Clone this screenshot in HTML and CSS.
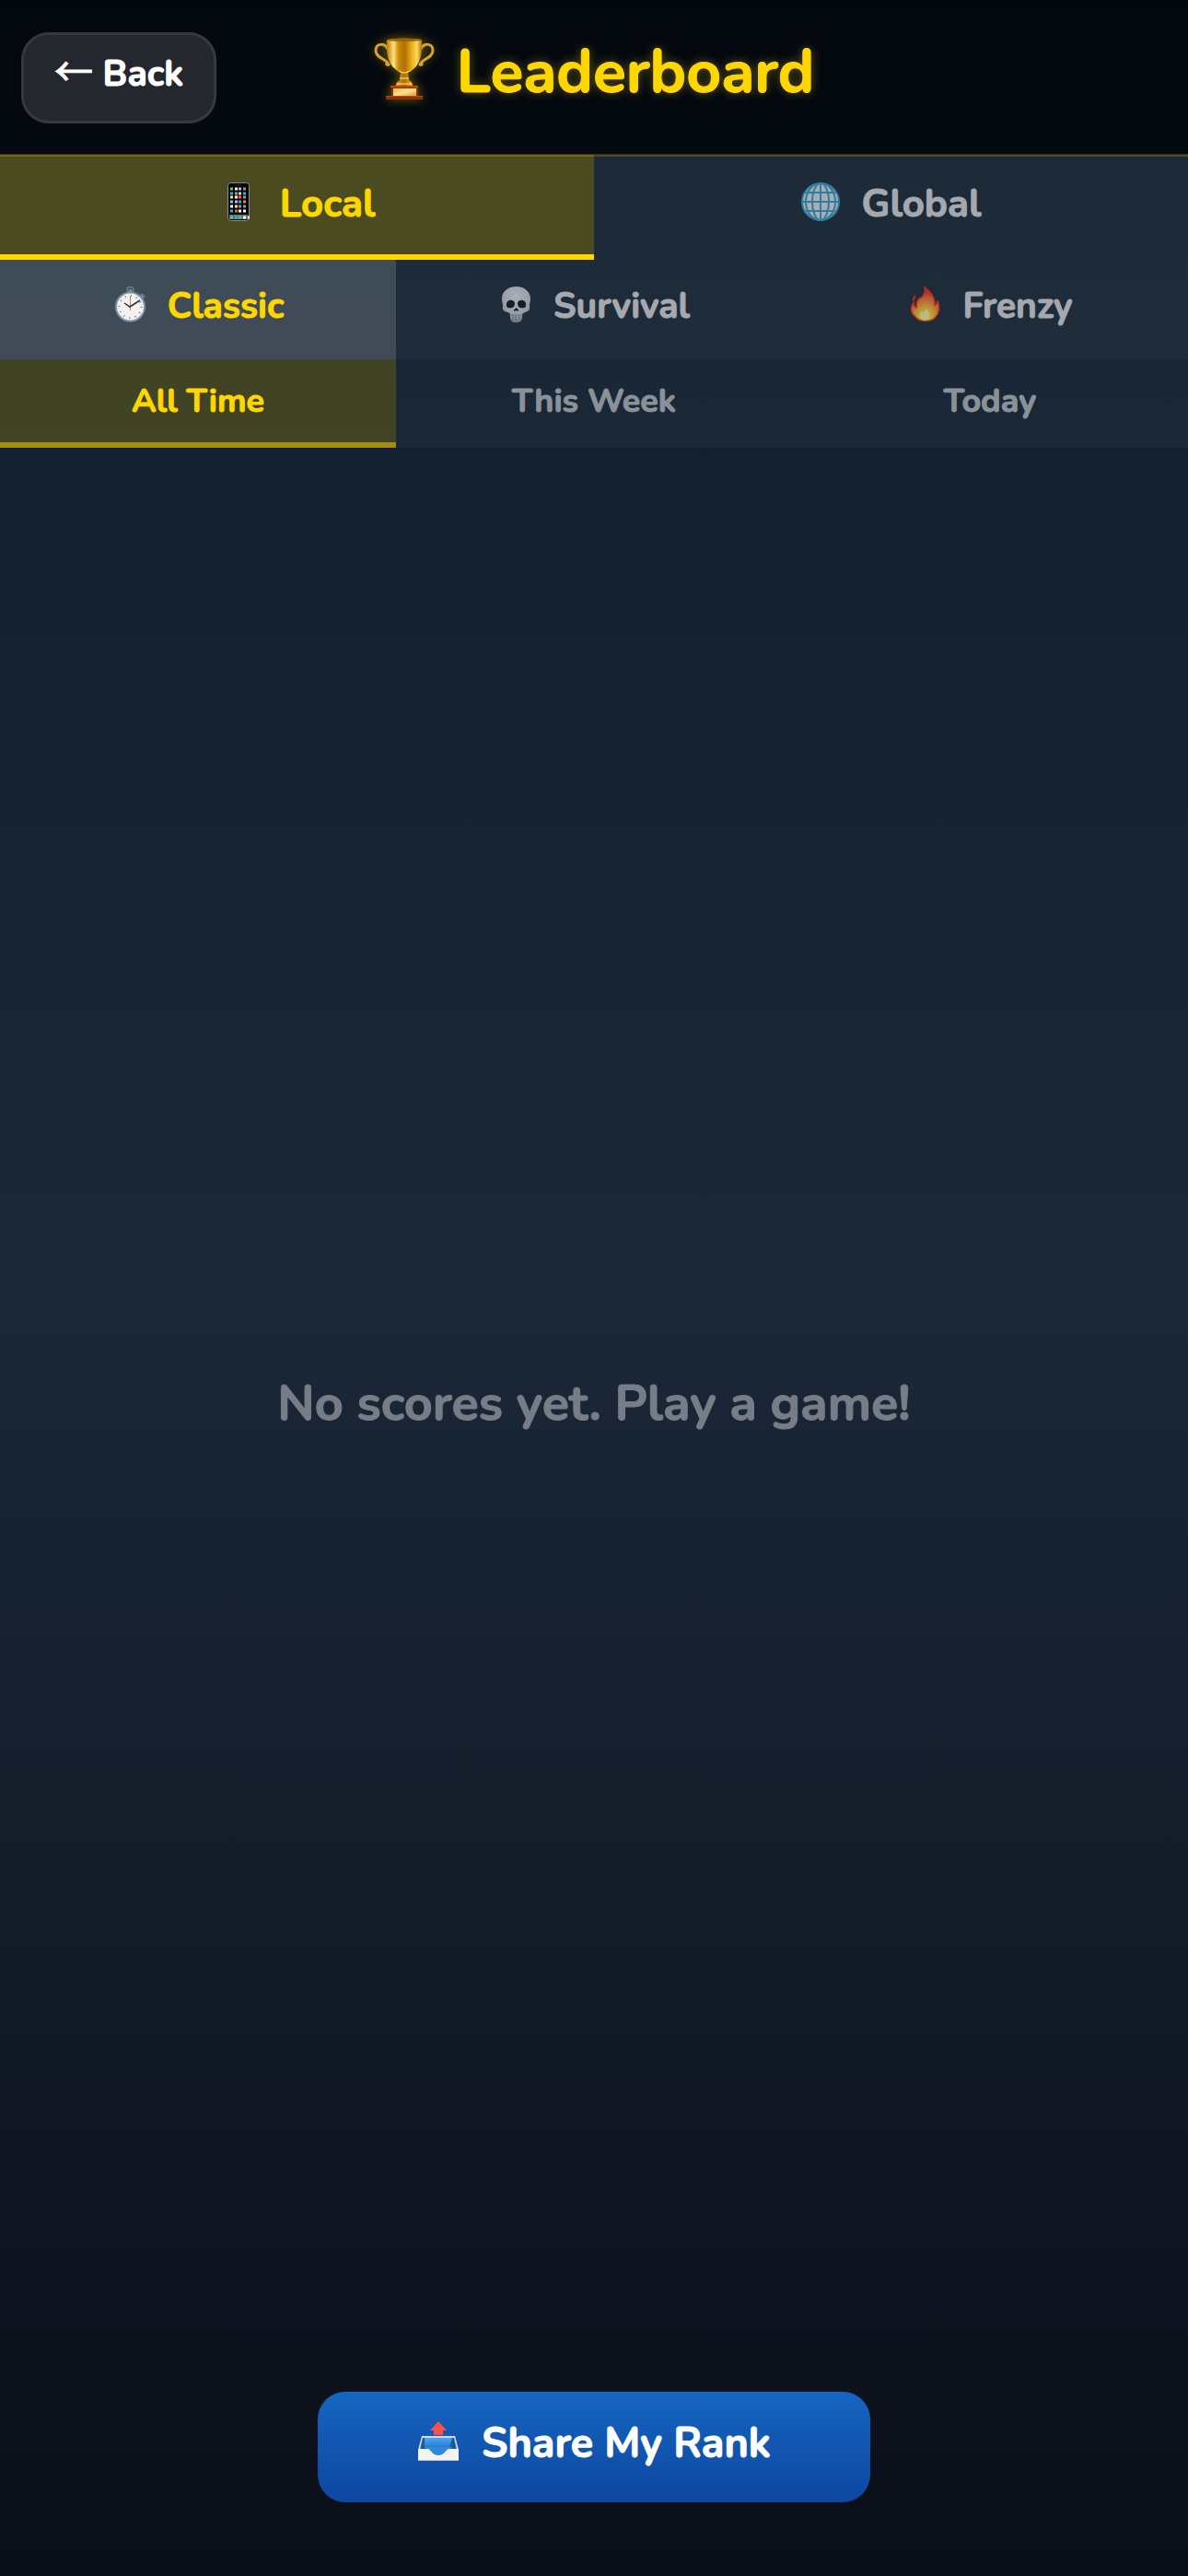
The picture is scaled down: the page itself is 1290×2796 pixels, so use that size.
FILE: index.html
```html
<!DOCTYPE html>
<html lang="en">
<head>
  <meta charset="utf-8">
  <meta name="viewport" content="width=device-width, initial-scale=1">
  <title>Leaderboard</title>
  <link rel="stylesheet" href="styles.css">
</head>
<body>
  <header class="header">
    <button type="button" class="back-btn"><span class="arrow">←</span> Back</button>
    <h1 class="title">
      <svg class="title-icon" viewBox="0 0 66 68" aria-hidden="true">
        <defs>
          <linearGradient id="cup" x1="0" x2="1" y1="0" y2="0">
            <stop offset="0" stop-color="#b87908"/>
            <stop offset=".2" stop-color="#ffe27a"/>
            <stop offset=".34" stop-color="#c98a08"/>
            <stop offset=".52" stop-color="#b06f04"/>
            <stop offset=".72" stop-color="#f0b21c"/>
            <stop offset=".86" stop-color="#ffd95a"/>
            <stop offset="1" stop-color="#a86a06"/>
          </linearGradient>
          <linearGradient id="plate" x1="0" x2="1" y1="0" y2="1">
            <stop offset="0" stop-color="#e9b84c"/>
            <stop offset=".5" stop-color="#fbe08c"/>
            <stop offset="1" stop-color="#d79c34"/>
          </linearGradient>
        </defs>
        <g fill="none" stroke="#d9a22a" stroke-width="3" stroke-linecap="round">
          <path d="M15 12C11 5 2 6 2 14c0 8 12 9 14 15"/>
          <path d="M51 12c4-7 13-6 13 2 0 8-12 9-14 15"/>
          <path d="M16 29c-1 1-3 0-2-1M50 29c1 1 3 0 2-1"/>
        </g>
        <path fill="url(#cup)" d="M14 2q19-3 38 0c1 12-1 25-8 31q-4 4-7 5l1 8q4 2 4 6l2 3H22l2-3q0-4 4-6l1-8q-3-1-7-5C15 27 13 14 14 2z"/>
        <path fill="#9c6205" d="M14 2q19-3 38 0v1q-19 2-38 0z"/>
        <path fill="none" stroke="#ffe998" stroke-width="1" d="M27 36q6 4 12 0M28 44h10M25 50h16"/>
        <path fill="#8e3206" d="M19 52h29v11h5v4H13v-4h6z"/>
        <path fill="#b64a12" d="M18 52h30v2H18zM13 63h40v1H13z"/>
        <path fill="url(#plate)" d="M21 55h25v8H21z"/>
      </svg>
      <span>Leaderboard</span>
    </h1>
  </header>

  <main class="content">
    <nav class="tabs scope-tabs">
      <button type="button" class="tab active">
        <svg class="tab-icon" viewBox="0 0 42 42" aria-hidden="true">
          <rect x="9.500" y="0.500" width="23" height="41" rx="3" fill="#050505" stroke="#8b8b8b"/>
          <path stroke="#333" d="M18 3h6"/>
          <path fill="#6d7073" d="M11 35h20v5H11z"/>
          <g fill="none" stroke-width="3" stroke-dasharray="3 20">
            <path stroke="#44d66a" d="M12 7h18M12 38h18"/>
            <path stroke="#fff" d="M17 7h14M17 16h14M12 26h14M26 31h5M31 38h2"/>
            <path stroke="#e9a2f0" d="M21 7h9M17 21h9"/>
            <path stroke="#999" d="M26 7h4M26 16h4M21 26h4M26 26h4M17 12h4"/>
            <path stroke="#18b7f5" d="M12 12h9M26 12h4M21 21h4M12 31h4M17 38h4"/>
            <path stroke="#ffe552" d="M12 16h4M17 26h4"/>
            <path stroke="#ff5a45" d="M21 16h4M17 31h4"/>
            <path stroke="#ff8a00" d="M26 21h4"/>
            <path stroke="#f3cda4" d="M21 12h4"/>
            <path stroke="#4ad8ea" d="M12 21h4"/>
            <path stroke="#fff" d="M21 31h4M26 38h4"/>
            <path stroke="#44d66a" d="M21 38h4"/>
          </g>
        </svg>
        <span>Local</span>
      </button>
      <button type="button" class="tab">
        <svg class="tab-icon" viewBox="0 0 42 42" aria-hidden="true">
          <circle cx="21" cy="21" r="20" fill="#e4e6ec"/>
          <g fill="none" stroke="#3aa0c8" stroke-width="2">
            <circle cx="21" cy="21" r="20"/>
            <path d="M21 1v40M1 21h40M5 11h32M5 31h32"/>
            <ellipse cx="21" cy="21" rx="9" ry="20"/>
            <ellipse cx="21" cy="21" rx="16" ry="20"/>
          </g>
        </svg>
        <span>Global</span>
      </button>
    </nav>

    <nav class="tabs mode-tabs">
      <button type="button" class="tab active">
        <svg class="tab-icon" viewBox="0 0 39 39" aria-hidden="true">
          <ellipse cx="19.500" cy="3" rx="3.500" ry="2.500" fill="none" stroke="#6f7c8a" stroke-width="1.500"/>
          <path stroke="#7d8791" stroke-width="3" d="M19.500 3v4"/>
          <path stroke="#6f7c8a" stroke-width="3" stroke-linecap="round" d="M32 9l2 2M31 12l2-2"/>
          <circle cx="19.500" cy="22" r="15.500" fill="#f2f2f2" stroke="#7f93a8" stroke-width="2"/>
          <circle cx="19.500" cy="22" r="12" fill="none" stroke="#777" stroke-width="2" stroke-dasharray="1 5.280"/>
          <path stroke="#ef6a5a" d="M19.500 10v16"/>
          <path fill="none" stroke="#2c3236" stroke-width="1.500" d="M13 18l6 4 11-7"/>
        </svg>
        <span>Classic</span>
      </button>
      <button type="button" class="tab">
        <svg class="tab-icon" viewBox="0 0 39 39" aria-hidden="true">
          <defs>
            <radialGradient id="bone" cx=".5" cy=".3" r=".7">
              <stop offset="0" stop-color="#e4e8ec"/>
              <stop offset=".7" stop-color="#c7ced5"/>
              <stop offset="1" stop-color="#929ba4"/>
            </radialGradient>
          </defs>
          <path fill="url(#bone)" d="M19.500 0C29 0 35 6 35 13c0 4-1 5-1 8 1 4-1 6-5 7-3 1-3 2-3 5s-1 6-6 6-7-2-7-6 0-4-3-5c-4-1-6-3-5-7 0-3-1-4-1-8C4 6 10 0 19.500 0z"/>
          <path fill="#14181c" d="M9 19c0-5 8-6 9-1 0 5-4 6-7 5-2 0-2-2-2-4zM30 19c0-5-8-6-9-1 0 5 4 6 7 5 2 0 2-2 2-4z"/>
          <path fill="#14181c" d="M19.500 23l3 3q-1 1-3 0-2 1-3 0z"/>
          <path fill="none" stroke="#7c858e" d="M14 31h11M16 32v5M19 32v6M23 32v5"/>
        </svg>
        <span>Survival</span>
      </button>
      <button type="button" class="tab">
        <svg class="tab-icon" viewBox="0 0 39 39" aria-hidden="true">
          <defs>
            <radialGradient id="fire" cx=".5" cy=".9" r=".8">
              <stop offset="0" stop-color="#fff9b0"/>
              <stop offset=".25" stop-color="#ffe02a"/>
              <stop offset=".5" stop-color="#f9a83c"/>
              <stop offset=".8" stop-color="#f4602c"/>
              <stop offset="1" stop-color="#ee2c14"/>
            </radialGradient>
          </defs>
          <path fill="url(#fire)" stroke="#f0301a" stroke-width="1.500" d="M19 1c6 4 12 11 11 19 2-1 3-3 3-5 3 7 2 14-2 18-5 6-17 6-22 0C4 29 3 23 7 17c0 3 1 5 3 6 0-7 1-9 5-11 4-3 5-6 4-11z"/>
          <path fill="#f0301a" d="M9 9c1 3-1 5-3 7-1-3 1-5 3-7z"/>
          <path fill="#fff6a4" d="M20 24c4 3 5 6 4 9-2 5-8 5-10 0-1-3 1-5 2-6l2 2q2-2 2-5z"/>
        </svg>
        <span>Frenzy</span>
      </button>
    </nav>

    <nav class="tabs period-tabs">
      <button type="button" class="tab active">All Time</button>
      <button type="button" class="tab">This Week</button>
      <button type="button" class="tab">Today</button>
    </nav>

    <p class="empty">No scores yet. Play a game!</p>
  </main>

  <footer class="footer">
    <button type="button" class="share-btn">
      <svg class="share-icon" viewBox="0 0 46 46" aria-hidden="true">
        <defs>
          <linearGradient id="tray" x1="0" x2="0" y1="0" y2="1">
            <stop offset="0" stop-color="#4fa5f8"/>
            <stop offset="1" stop-color="#1f7cc9"/>
          </linearGradient>
        </defs>
        <path fill="#d8d8d2" d="M5 17h36l4 15H1z"/>
        <path fill="#175c9e" d="M6 19h34l3 13H3z"/>
        <path fill="url(#tray)" d="M8 19h30l-3 11H8z"/>
        <path fill="#2f88d8" d="M8 29h30l-8 10H16z"/>
        <path fill="#f2f2ef" d="M1 31h10c4 0 5 7 12 7s8-7 12-7h10v13H1z"/>
        <path fill="#c4c6c6" d="M1 43h44v1H1z"/>
        <path fill="#fb5148" d="M23 1l9 10h-4v5H18v-5h-4z"/>
      </svg>
      <span>Share My Rank</span>
    </button>
  </footer>
</body>
</html>
```
FILE: styles.css
```css
:root {
  --gold: #ffd700;
  --muted: #a5a9af;
  --dim: #8b9198;
  --faint: #777d86;
}

* {
  box-sizing: border-box;
  margin: 0;
  padding: 0;
}

body {
  min-height: 100vh;
  display: flex;
  flex-direction: column;
  font-family: Nunito, Lato, sans-serif;
  font-weight: 700;
  -webkit-text-stroke: 1px currentColor;
  color: white;
  background: linear-gradient(180deg, #0d1b2a 0%, #1b2838 50%, #0a0e18 100%);
}

button {
  border: none;
  font: inherit;
  color: inherit;
  cursor: pointer;
}

svg {
  flex: none;
}

/* Header */
.header {
  position: relative;
  display: grid;
  grid-template-columns: 1fr auto 1fr;
  align-items: center;
  height: 168px;
  padding: 0 23px;
  background: rgba(0, 0, 4, 0.7);
}

.header::after {
  content: '';
  position: absolute;
  left: 0;
  right: 0;
  bottom: -2px;
  height: 3px;
  background: rgba(255, 215, 0, 0.2);
}

.back-btn {
  justify-self: start;
  height: 99px;
  padding: 0 33px 8px;
  border: 3px solid rgba(255, 255, 255, 0.2);
  border-radius: 30px;
  background: rgba(255, 255, 255, 0.13);
  background-clip: padding-box;
  font-size: 39px;
}

.arrow {
  font-family: "Noto Sans CJK JP", sans-serif;
  font-size: 42px;
  font-weight: 400;
  line-height: 1;
}

.title {
  display: flex;
  align-items: center;
  gap: 24px;
  padding-bottom: 12px;
  font-size: 66px;
  line-height: 80px;
  font-weight: 700;
  color: var(--gold);
  text-shadow: 0 0 12px rgba(255, 215, 0, 0.4);
}

.title-icon {
  width: 66px;
  height: 68px;
  margin-bottom: 6px;
  filter: drop-shadow(0 0 6px rgba(255, 215, 0, 0.4));
}

/* Tabs */
.content {
  flex: 1;
  display: flex;
  flex-direction: column;
}

.tabs {
  display: flex;
}

.tab {
  flex: 1;
  display: flex;
  align-items: center;
  justify-content: center;
  background: rgba(255, 255, 255, 0.06);
  color: var(--muted);
}

.tab.active {
  color: var(--gold);
}

.tab-icon {
  margin-bottom: 4px;
}

.tab:not(.active) .tab-icon {
  opacity: 0.7;
}

.scope-tabs .tab {
  height: 114px;
  gap: 24px;
  padding-bottom: 8px;
  font-size: 42px;
}

.scope-tabs .active {
  padding-bottom: 2px;
  background: rgba(255, 215, 0, 0.25);
  border-bottom: 6px solid var(--gold);
}

.scope-tabs .tab-icon {
  width: 42px;
  height: 42px;
}

.mode-tabs .tab {
  height: 108px;
  gap: 21px;
  padding-bottom: 8px;
  font-size: 39px;
}

.mode-tabs .active {
  background: rgba(255, 255, 255, 0.2);
}

.mode-tabs .tab-icon {
  width: 39px;
  height: 39px;
}

.period-tabs .tab {
  height: 96px;
  padding-bottom: 6px;
  font-size: 36px;
  background: rgba(255, 255, 255, 0.04);
  color: var(--dim);
}

.period-tabs .tab.active {
  padding-bottom: 0;
  background: rgba(255, 215, 0, 0.2);
  background-clip: padding-box;
  border-bottom: 6px solid rgba(255, 215, 0, 0.6);
  color: var(--gold);
}

.empty {
  flex: 1;
  display: flex;
  align-items: center;
  justify-content: center;
  padding-top: 4px;
  font-size: 54px;
  color: var(--faint);
}

/* Share button */
.footer {
  display: flex;
  justify-content: center;
  padding: 40px 24px 80px;
}

.share-btn {
  display: flex;
  align-items: center;
  justify-content: center;
  gap: 24px;
  width: 600px;
  height: 120px;
  padding-bottom: 8px;
  border-radius: 30px;
  background: linear-gradient(180deg, #1565c0 0%, #0d47a1 100%);
  font-size: 45px;
}

.share-icon {
  width: 46px;
  height: 46px;
  margin-bottom: 4px;
}
```
